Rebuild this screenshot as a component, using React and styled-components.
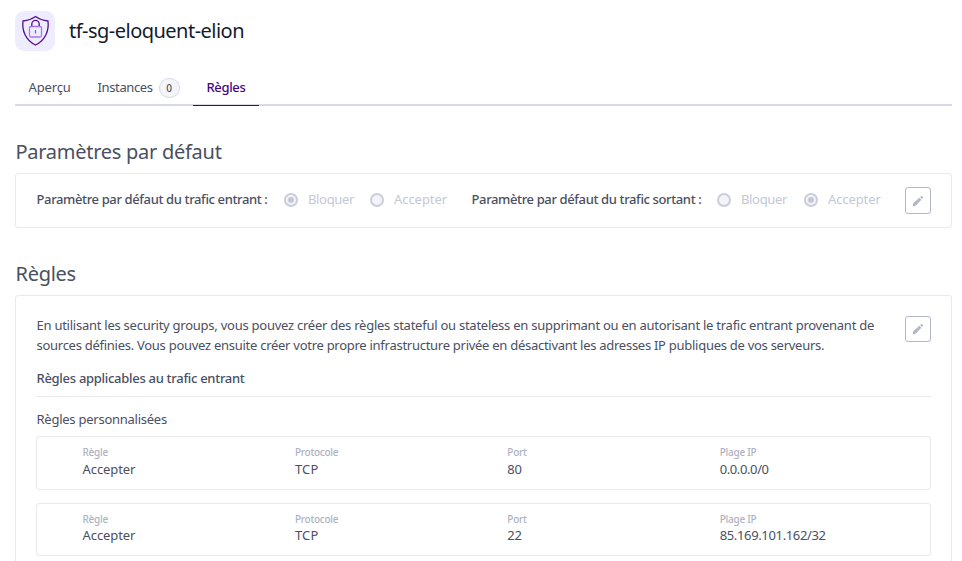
import React from "react";
import styled, { createGlobalStyle } from "styled-components";

const GlobalStyle = createGlobalStyle`
  * { box-sizing: border-box; }
  html, body { margin: 0; padding: 0; background: #fff; }
  body {
    height: 100vh;
    overflow: hidden;
    color: #4a4f62;
    font-family: "Noto Sans", "Open Sans", sans-serif;
    font-size: 13px;
    line-height: 20px;
  }
`;

const Text = styled.span`
  white-space: nowrap;
  letter-spacing: ${(p) => p.$spacing || 0}px;
`;

const ControlText = styled(Text)`
  padding-bottom: 2px;
`;

const Page = styled.main`
  width: 962px;
  padding: 11px 10px 0 15px;
`;

const Header = styled.header`
  display: flex;
  align-items: center;
  gap: 14px;
  height: 40px;
`;

const Emblem = styled.div`
  width: 40px;
  height: 40px;
  border-radius: 9px;
  background: #eeedff;
`;

const Title = styled.h1`
  margin: 0;
  color: #151a2d;
  font-size: 20px;
  font-weight: 400;
  line-height: 40px;
  letter-spacing: -0.52px;
`;

const Tabs = styled.nav`
  display: flex;
  height: 35px;
  margin-top: 20px;
  border-bottom: 2px solid #d8d9e8;
`;

const Tab = styled.a`
  display: flex;
  align-items: center;
  gap: 6px;
  width: ${(p) => p.$width}px;
  height: 35px;
  padding: 0 0 1px 13.5px;
  color: ${(p) => (p.$active ? "#46047f" : "#4a4f62")};
  font-weight: ${(p) => (p.$active ? 500 : 400)};
  border-bottom: 1px solid ${(p) => (p.$active ? "#46047f" : "transparent")};
`;

const Count = styled.span`
  display: flex;
  align-items: center;
  justify-content: center;
  width: 21px;
  height: 20px;
  border: 1px solid #d8d9e8;
  border-radius: 10px;
  background: #f4f5f8;
  font-size: 10px;
  font-weight: 500;
  line-height: 18px;
`;

const SectionTitle = styled.h2`
  height: 28px;
  margin: ${(p) => p.$top}px 0 7px 0.5px;
  font-size: 20px;
  font-weight: 400;
  line-height: 28px;
  letter-spacing: -0.27px;
`;

const Panel = styled.section`
  border: 1px solid #e8e8f0;
  border-radius: 3px;
`;

const DefaultsPanel = styled(Panel)`
  display: flex;
  align-items: center;
  height: 55px;
  padding: 0 20px 0 20.5px;
`;

const RulesPanel = styled(Panel)`
  height: 290px;
  padding: 20px 20px 0;
`;

const Setting = styled.div`
  display: flex;
  align-items: center;
  width: ${(p) => p.$width}px;
  padding-bottom: 2px;
`;

const SettingLabel = styled.span`
  width: ${(p) => p.$width}px;
  padding-bottom: 2px;
  font-weight: 500;
  letter-spacing: -0.37px;
  white-space: nowrap;
`;

const Option = styled.label`
  display: flex;
  align-items: center;
  gap: 10px;
  width: ${(p) => p.$width}px;
  color: #c4c8d7;
`;

const Radio = styled.span`
  display: flex;
  flex: none;
  align-items: center;
  justify-content: center;
  width: 14px;
  height: 14px;
  border: 2px solid #cacddb;
  border-radius: 50%;
  background: #f3f4f7;

  &::after {
    width: 6px;
    height: 6px;
    border-radius: 50%;
    background: ${(p) => (p.$checked ? "#c4c8d7" : "transparent")};
    content: "";
  }
`;

const EditButton = styled.button`
  display: flex;
  align-items: center;
  justify-content: center;
  width: 26px;
  height: ${(p) => p.$height || 26}px;
  margin-left: auto;
  padding: 0;
  border: 1px solid #b2b6c6;
  border-radius: 3px;
  background: #fff;
`;

const Intro = styled.div`
  display: flex;
  align-items: flex-start;
  padding-left: 0.5px;
`;

const Paragraph = styled.p`
  display: flex;
  flex-direction: column;
  margin: -1px 0 0;
`;

const Subheading = styled.h3`
  height: 42px;
  margin: 0;
  padding: 13px 0 0 0.5px;
  border-bottom: 1px solid #e8e8f0;
  font-size: 13px;
  font-weight: 500;
  line-height: 20px;
  letter-spacing: -0.29px;
`;

const GroupTitle = styled.h4`
  margin: 12px 0 7px 0.5px;
  font-size: 13px;
  font-weight: 400;
  line-height: 20px;
  letter-spacing: -0.25px;
`;

const Rule = styled.div`
  display: grid;
  grid-template-columns: repeat(4, 212.4px);
  height: ${(p) => p.$height}px;
  margin-bottom: 13px;
  padding: 8px 0 0 45.5px;
  border: 1px solid #e8e8f0;
  border-radius: 3px;
`;

const Field = styled.div`
  display: flex;
  flex-direction: column;
`;

const FieldLabel = styled.span`
  color: #aeb2c3;
  font-size: 10px;
  font-weight: 500;
  line-height: 15px;
  letter-spacing: -0.25px;
`;

const FieldValue = styled.span`
  margin-top: ${(p) => p.$top}px;
  line-height: 18px;
  letter-spacing: ${(p) => p.$spacing}px;
`;

const ShieldIcon = () => (
  <svg width="40" height="40" viewBox="0 0 40 40" fill="none" strokeLinejoin="round">
    <path
      d="M20.5 5.5C17 8 12.5 9.5 8 10C7 19 10 29 20.5 34C31 29 34 19 33 10C28.5 9.5 24 8 20.5 5.5Z"
      stroke="#521094"
      strokeWidth="1.3"
    />
    <rect x="14.5" y="15.5" width="12" height="10.5" rx="1.5" stroke="#a875f2" strokeWidth="1.3" />
    <path d="M16.8 15V13a3.7 3.7 0 0 1 7.4 0v2" stroke="#521094" strokeWidth="1.3" />
    <path d="M20.5 19v3.5" stroke="#8b4ddb" strokeWidth="1.2" />
  </svg>
);

const PencilIcon = () => (
  <svg width="12" height="12" viewBox="0 0 12 12">
    <path d="M1 11V8.6L7.4 2.7L9.4 4.7L3.3 11Z" fill="#b2b6c6" />
    <path d="M8.1 2.1L9 1.3Q9.6 .8 10.2 1.3L10.8 1.9Q11.3 2.5 10.8 3.1L10 4Z" fill="#b2b6c6" />
  </svg>
);

const Choice = ({ label, checked, width, spacing }) => (
  <Option $width={width}>
    <Radio $checked={checked} />
    <ControlText $spacing={spacing}>{label}</ControlText>
  </Option>
);

const RuleRow = ({ port, range, height, gap, rangeSpacing }) => (
  <Rule $height={height}>
    <Field>
      <FieldLabel>Règle</FieldLabel>
      <FieldValue $top={gap} $spacing={-0.08}>Accepter</FieldValue>
    </Field>
    <Field>
      <FieldLabel>Protocole</FieldLabel>
      <FieldValue $top={gap} $spacing={0.2}>TCP</FieldValue>
    </Field>
    <Field>
      <FieldLabel>Port</FieldLabel>
      <FieldValue $top={gap} $spacing={-0.3}>{port}</FieldValue>
    </Field>
    <Field>
      <FieldLabel>Plage IP</FieldLabel>
      <FieldValue $top={gap} $spacing={rangeSpacing}>{range}</FieldValue>
    </Field>
  </Rule>
);

export default function App() {
  return (
    <>
      <GlobalStyle />
      <Page>
        <Header>
          <Emblem><ShieldIcon /></Emblem>
          <Title>tf-sg-eloquent-elion</Title>
        </Header>
        <Tabs>
          <Tab $width={69}><ControlText $spacing={-0.15}>Aperçu</ControlText></Tab>
          <Tab $width={109}>
            <ControlText $spacing={-0.37}>Instances</ControlText>
            <Count>0</Count>
          </Tab>
          <Tab $width={66} $active><ControlText $spacing={-0.35}>Règles</ControlText></Tab>
        </Tabs>

        <SectionTitle $top={32}>Paramètres par défaut</SectionTitle>
        <DefaultsPanel>
          <Setting $width={435}>
            <SettingLabel $width={247.5}>Paramètre par défaut du trafic entrant :</SettingLabel>
            <Choice label="Bloquer" checked width={86} spacing={-0.34} />
            <Choice label="Accepter" width={80} spacing={-0.06} />
          </Setting>
          <Setting $width={410}>
            <SettingLabel $width={245.5}>Paramètre par défaut du trafic sortant :</SettingLabel>
            <Choice label="Bloquer" width={87} spacing={-0.34} />
            <Choice label="Accepter" checked width={77} spacing={-0.1} />
          </Setting>
          <EditButton $height={27} aria-label="Modifier les paramètres"><PencilIcon /></EditButton>
        </DefaultsPanel>

        <SectionTitle $top={32}>Règles</SectionTitle>
        <RulesPanel>
          <Intro>
            <Paragraph>
              <Text $spacing={-0.25}>
                En utilisant les security groups, vous pouvez créer des règles stateful ou stateless en supprimant ou en autorisant le trafic entrant provenant de
              </Text>
              <Text $spacing={-0.272}>
                sources définies. Vous pouvez ensuite créer votre propre infrastructure privée en désactivant les adresses IP publiques de vos serveurs.
              </Text>
            </Paragraph>
            <EditButton aria-label="Modifier les règles"><PencilIcon /></EditButton>
          </Intro>
          <Subheading>Règles applicables au trafic entrant</Subheading>
          <GroupTitle>Règles personnalisées</GroupTitle>
          <RuleRow port="80" range="0.0.0.0/0" height={54} gap={0} rangeSpacing={-0.39} />
          <RuleRow port="22" range="85.169.101.162/32" height={53} gap={-1} rangeSpacing={-0.35} />
        </RulesPanel>
      </Page>
    </>
  );
}
